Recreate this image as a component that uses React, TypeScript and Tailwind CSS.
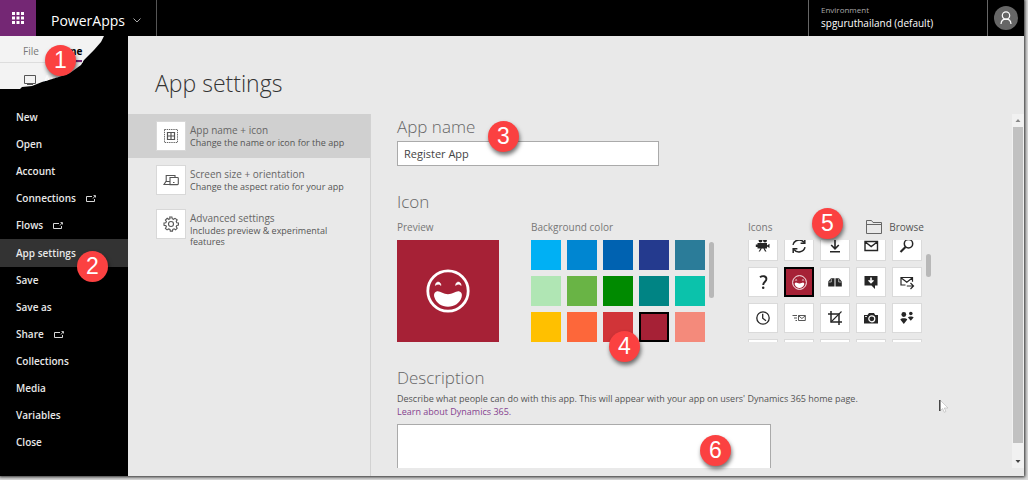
import { useState, type ReactNode } from "react";

function Badge({ n, place }: { n: number; place: string }) {
  return (
    <span
      className={`absolute z-20 flex size-[31px] items-center justify-center rounded-full bg-[#fb4141] font-['Liberation_Sans',sans-serif] text-[23px] leading-none font-medium text-white shadow-[1px_3px_4px_rgba(0,0,0,0.55)] ${place}`}
    >
      {n}
    </span>
  );
}

const menu: { label: string; external?: boolean }[] = [
  { label: "New" },
  { label: "Open" },
  { label: "Account" },
  { label: "Connections", external: true },
  { label: "Flows", external: true },
  { label: "App settings" },
  { label: "Save" },
  { label: "Save as" },
  { label: "Share", external: true },
  { label: "Collections" },
  { label: "Media" },
  { label: "Variables" },
  { label: "Close" },
];

function ExternalIcon() {
  return (
    <svg className="h-2 w-2.5" viewBox="0 0 10 8" fill="none" stroke="#d8d8d8">
      <path d="M6 1.500H.5v5h8V4" />
      <path d="M7 3.500 9 1M7.500.5h2v2" strokeWidth=".9" />
    </svg>
  );
}

const swatches = [
  { name: "Sky blue", cls: "bg-[#00b0f4]" },
  { name: "Blue", cls: "bg-[#0086d1]" },
  { name: "Dark blue", cls: "bg-[#0062b1]" },
  { name: "Indigo", cls: "bg-[#243a8e]" },
  { name: "Steel", cls: "bg-[#2b7c99]" },
  { name: "Mint", cls: "bg-[#b0e6b4]" },
  { name: "Light green", cls: "bg-[#69b445]" },
  { name: "Green", cls: "bg-[#008a00]" },
  { name: "Teal", cls: "bg-[#008484]" },
  { name: "Turquoise", cls: "bg-[#0bc2ab]" },
  { name: "Yellow", cls: "bg-[#ffc000]" },
  { name: "Orange", cls: "bg-[#fd673a]" },
  { name: "Red", cls: "bg-[#d13438]" },
  { name: "Crimson", cls: "bg-[#a62136]" },
  { name: "Salmon", cls: "bg-[#f48a7b]" },
];

function Smile({ className }: { className: string }) {
  return (
    <svg className={className} viewBox="0 0 44 44" fill="none">
      <circle cx="22" cy="22" r="20.2" stroke="#fff" strokeWidth="2.8" />
      <path d="M9.400 16.400c.4-4.400 5-4.400 5.600 0-1.800-1.600-3.800-1.600-5.600 0ZM29.600 16.400c.4-4.400 5-4.400 5.600 0-1.800-1.600-3.800-1.600-5.600 0Z" fill="#fff" stroke="#fff" strokeWidth=".6" />
      <path d="M10.500 22.500c3-1.300 6.500 2.700 11.500 2.700s8.500-4 11.500-2.700c2.600 1.100 2.800 3.500 2 6C33.800 33.800 28.500 37.800 22 37.800S10.200 33.800 8.500 28.500c-.8-2.500-.6-4.900 2-6Z" fill="#fff" />
    </svg>
  );
}

const glyphs: { name: string; art: ReactNode }[] = [
  {
    name: "Video",
    art: (
      <g fill="#262626">
        <circle cx="5.500" cy="2.500" r="1.900" />
        <circle cx="10" cy="2.500" r="1.900" />
        <path d="M2.500 5h9.500v5.500H2.500zM.8 6.500h2v2.500h-2zM12 7.500l2.500-1.700v4.200L12 8.600zM5.500 10.500h1.200L5 13.500H3.600zM8.500 10.500h1.200l1.800 3H10z" />
      </g>
    ),
  },
  {
    name: "Sync",
    art: (
      <g fill="none" stroke="#262626" strokeWidth="1.500">
        <path d="M2 6.800A6.200 6.200 0 0 1 13 4.500M14 9.200A6.200 6.200 0 0 1 3 11.500" />
        <path d="M13.800 1v4.200H9.600M2.200 15v-4.200h4.200" />
      </g>
    ),
  },
  {
    name: "Download",
    art: (
      <g fill="none" stroke="#262626" strokeWidth="1.600">
        <path d="M8 0v10.500M4.200 7 8 10.800 11.800 7M3 13.800h10" />
      </g>
    ),
  },
  {
    name: "Mail",
    art: (
      <g fill="none" stroke="#262626" strokeWidth="1.400">
        <path d="M2 3.500h12.500v9H2zM2 3.800l6.200 4.700 6.300-4.700" />
      </g>
    ),
  },
  {
    name: "Search",
    art: (
      <g fill="none" stroke="#262626">
        <circle cx="9.500" cy="5.800" r="4.200" strokeWidth="1.500" />
        <path d="m6.500 9-5 5" strokeWidth="2.200" />
      </g>
    ),
  },
  {
    name: "Help",
    art: (
      <g>
        <path d="M5 3.300C7.500 1.200 11.400 2 11.400 5c0 2.600-3.200 3-3.200 6" fill="none" stroke="#262626" strokeWidth="1.900" />
        <circle cx="8.200" cy="13.800" r="1.250" fill="#262626" />
      </g>
    ),
  },
  { name: "Smile", art: null },
  {
    name: "Book",
    art: (
      <g fill="#262626">
        <path d="M1.200 12.500V7.500l2.800-3.200h3.500v8.200zM8.500 4.300H12l2.800 3.200v5H8.500z" />
        <path d="M4.300 4.800v3.200H1.500M11.700 4.800v3.200h2.800" fill="none" stroke="#fff" strokeWidth=".6" />
      </g>
    ),
  },
  {
    name: "Import message",
    art: (
      <g>
        <path d="M1.500 2h13v9.500H12V15l-3.500-3.500h-7z" fill="#262626" />
        <path d="M8 3.500v5M5.600 6.300 8 8.700l2.400-2.400" fill="none" stroke="#fff" strokeWidth="1.600" />
      </g>
    ),
  },
  {
    name: "Forward mail",
    art: (
      <g fill="none" stroke="#262626" strokeWidth="1.200">
        <path d="M6.500 11H2V3.500h11.500v4.200M2 3.800l5.800 4.500 5.700-4.500M7.800 12h6.500M11.500 9l3 3-3 3" />
      </g>
    ),
  },
  {
    name: "Clock",
    art: (
      <g fill="none" stroke="#262626" strokeWidth="1.300">
        <circle cx="8" cy="8" r="6.200" />
        <path d="M7.700 3.800v4.500l3.300 2.500" />
      </g>
    ),
  },
  {
    name: "Send mail",
    art: (
      <g fill="none" stroke="#444" strokeWidth=".9">
        <path d="M7.500 5.500h6.800v5H7.500zM7.500 5.800l3.400 2.700 3.400-2.700M1.500 5.500H6M3 8h3M4.500 10.500H6" />
      </g>
    ),
  },
  {
    name: "Crop",
    art: (
      <g fill="none" stroke="#262626" strokeWidth="1.500">
        <path d="M4 1v11h11M1 4h11v11" />
        <path d="M4 12 14.500 1.500" strokeWidth="1.100" />
      </g>
    ),
  },
  {
    name: "Camera",
    art: (
      <g>
        <path d="M1 5h3.500L6 3h5l1.200 2H15v8.500H1z" fill="#262626" />
        <circle cx="8.800" cy="8.800" r="3" fill="none" stroke="#fff" strokeWidth="1.200" />
        <path d="M2.200 6.500h1.600" stroke="#fff" />
      </g>
    ),
  },
  {
    name: "People",
    art: (
      <g fill="#262626">
        <circle cx="4.800" cy="4.500" r="2.400" />
        <circle cx="11.800" cy="3.500" r="1.800" />
        <path d="M1.300 9.500c.8-1.700 6.200-1.700 7 0L4.800 14zM9 7.500c.8-1.200 4.800-1.200 5.600 0l-2.800 3.300z" />
      </g>
    ),
  },
  { name: "More 1", art: null },
  { name: "More 2", art: null },
  { name: "More 3", art: null },
  { name: "More 4", art: null },
  { name: "More 5", art: null },
];

const sections: { title: string; note: string; icon: ReactNode }[] = [
  {
    title: "App name + icon",
    note: "Change the name or icon for the app",
    icon: (
      <>
        <rect x="1.500" y="1.500" width="13" height="13" strokeDasharray="1.400 .8" strokeWidth=".9" />
        <path d="M4.500 4.500h7v7h-7zM8 4.500v7M4.500 8h7" strokeWidth="1.200" />
      </>
    ),
  },
  {
    title: "Screen size + orientation",
    note: "Change the aspect ratio for your app",
    icon: <path d="M12 5V3.500H3.200V9L1 12.500h6M3.200 9.500h3.500M7 5.500h7.500a.8.8 0 0 1 .8.8v5.500a.8.8 0 0 1-.8.8H7zM10 10.500h1.500" strokeWidth="1.100" />,
  },
  {
    title: "Advanced settings",
    note: "Includes preview & experimental features",
    icon: (
      <>
        <path d="m6.700 1 .3 1.700-1.300.6-1.500-1L2.400 4l1 1.500-.6 1.300L1 7v2.200l1.800.4.6 1.200-1 1.500 1.700 1.600 1.500-1 1.400.6.3 1.600h2.200l.3-1.700 1.300-.6 1.500 1 1.600-1.600-1-1.500.6-1.300 1.700-.3V7l-1.700-.3-.6-1.300 1-1.500L12 2.300l-1.500 1-1.300-.6L8.900 1z" strokeWidth="1.100" />
        <circle cx="8" cy="8" r="2.500" strokeWidth="1.100" />
      </>
    ),
  },
];

export default function App() {
  const [name, setName] = useState("Register App");
  const [color, setColor] = useState(13);
  const [icon, setIcon] = useState(6);

  return (
    <div className="h-screen bg-[#dcdcdc] pr-1 pb-1 font-['Open_Sans','Noto_Sans',sans-serif] text-[#666]">
      <div className="relative flex h-full flex-col bg-[#e9e9e9] shadow-[0_0_3px_1px_#222]">
        <header className="flex h-9 shrink-0 bg-black text-white">
          <button aria-label="App launcher" className="flex w-9 items-center justify-center bg-[#742774]">
            <svg className="size-3" viewBox="0 0 12 12" fill="#fff">
              <path d="M0 0h3v3H0zM4.500 0h3v3h-3zM9 0h3v3H9zM0 4.500h3v3H0zM4.500 4.500h3v3h-3zM9 4.500h3v3H9zM0 9h3v3H0zM4.500 9h3v3h-3zM9 9h3v3H9z" />
            </svg>
          </button>
          <button className="flex w-[121px] items-center justify-between border-r border-[#555] pr-[15px] pl-[15px] pt-1 text-[14px]">
            PowerApps
            <svg className="h-[5px] w-2" viewBox="0 0 8 5" fill="none" stroke="#aaa">
              <path d="m.5.5 3.500 3.500L7.500.5" />
            </svg>
          </button>
          <div className="ml-auto flex w-[180px] flex-col border-r border-l border-[#666] pt-1 pl-3">
            <span className="text-[8px] leading-3 text-[#aaa]">Environment</span>
            <span className="text-[10px] leading-[14px] font-medium">spguruthailand (default)</span>
          </div>
          <button aria-label="Profile" className="flex w-9 items-center justify-center">
            <span className="flex size-6 items-center justify-center rounded-full bg-[#666]">
              <svg className="size-4" viewBox="0 0 16 16" fill="none" stroke="#fff" strokeWidth="1.200">
                <circle cx="8" cy="5.500" r="3.700" />
                <path d="M3 14c.2-3 2.200-4.800 5-4.800s4.800 1.800 5 4.800" />
              </svg>
            </span>
          </button>
        </header>

        <div className="flex min-h-0 flex-1">
          <aside className="relative flex w-32 shrink-0 flex-col bg-black text-white">
            <div className="h-[68px] shrink-0">
              <div className="h-[53px] w-[105px] bg-[#f3f3f3] [clip-path:polygon(0_0,104px_0,101px_6px,94px_14px,84px_24px,81px_29px,70px_37px,62px_40px,52px_43px,42px_46px,32px_50px,22px_51px,20px_53px,0_53px)]">
                <div className="flex h-[27px] gap-3.5 border-b border-[#ddd] pl-[23px] text-[10px] text-[#777]">
                  <span className="pt-2">File</span>
                  <span className="h-[26px] border-b-2 border-[#742774] pt-2 font-bold text-black">Home</span>
                </div>
                <div className="flex h-[25px] items-center gap-2 pt-2 pl-6 text-[10px]">
                  <svg className="h-[11px] w-3" viewBox="0 0 12 11" fill="none" stroke="#555">
                    <path d="M.5 1.500h11v8H.5zM3 10.500h6" />
                  </svg>
                  App
                </div>
              </div>
            </div>
            <nav className="flex flex-col text-[10px] font-semibold text-[#e8e8e8]">
              {menu.map((m) => (
                <button
                  key={m.label}
                  className={`flex items-center gap-2.5 pl-4 ${m.label === "App settings" ? "h-7 bg-[#333]" : "h-[27px]"}`}
                >
                  {m.label}
                  {m.external && <ExternalIcon />}
                </button>
              ))}
            </nav>
            <Badge n={1} place="left-[45px] top-[9px]" />
            <Badge n={2} place="left-[77px] top-[215px]" />
          </aside>

          <main className="flex min-w-0 flex-1 flex-col">
            <h1 className="h-[78px] shrink-0 pt-[29px] pl-[27px] text-[23px] leading-9 font-light text-[#333]">App settings</h1>
            <div className="flex min-h-0 flex-1">
              <nav className="w-[243px] shrink-0 border-r border-[#d2d2d2]">
                {sections.map((s, i) => (
                  <button
                    key={s.title}
                    className={`flex min-h-11 w-full gap-1 pt-[7px] pl-7 text-left ${i === 0 ? "bg-[#d0d0d0]" : ""}`}
                  >
                    <span className="flex size-[30px] shrink-0 items-center justify-center border border-[#d8d8d8] bg-white">
                      <svg className="size-4" viewBox="0 0 16 16" fill="none" stroke="#555">
                        {s.icon}
                      </svg>
                    </span>
                    <span className="flex w-[166px] flex-col pt-[3px]">
                      <span className="text-[10px] leading-[13px] text-[#666]">{s.title}</span>
                      <span className="text-[9px] leading-[11px] text-[#555]">{s.note}</span>
                    </span>
                  </button>
                ))}
              </nav>

              <section className="relative mb-2 flex min-w-0 flex-1">
                <div className="min-w-0 flex-1 overflow-hidden pl-[26px]">
                  <label htmlFor="name" className="block h-[27px] text-[17px] leading-[26px] font-light text-[#666]">
                    App name
                  </label>
                  <input
                    id="name"
                    value={name}
                    onChange={(e) => setName(e.target.value)}
                    className="block h-[25px] w-[262px] border border-[#aaa] bg-white px-1.5 text-[11px] text-[#444] outline-none"
                  />
                  <h2 className="mt-[23px] h-[27px] text-[17px] leading-[26px] font-light text-[#666]">Icon</h2>
                  <div className="flex text-[10px] leading-4 text-[#777]">
                    <div className="mr-8">
                      <div className="pt-[3px] pb-[5px]">Preview</div>
                      <div className={`flex size-[102px] items-center justify-center ${swatches[color].cls}`}>
                        <Smile className="size-11" />
                      </div>
                    </div>
                    <div className="mr-[34px]">
                      <div className="pt-[3px] pb-[5px]">Background color</div>
                      <div className="flex gap-1">
                        <div className="grid grid-cols-5 gap-1.5">
                          {swatches.map((s, i) => (
                            <button
                              key={s.name}
                              aria-label={s.name}
                              onClick={() => setColor(i)}
                              className={`size-[30px] ${s.cls} ${i === color ? "border-2 border-black" : ""}`}
                            />
                          ))}
                        </div>
                        <div className="mt-[2px] h-14 w-[5px] rounded-full bg-[#b8b8b8]" />
                      </div>
                    </div>
                    <div>
                      <div className="flex justify-between pt-[3px] pr-[7px] pb-[5px]">
                        <span>Icons</span>
                        <button className="flex items-center gap-[7px] text-[#555]">
                          <svg className="h-[14px] w-4" viewBox="0 0 16 14" fill="none" stroke="#666">
                            <path d="M.5 13.500V.5h5l1.500 2h8.500v11zM.5 4.500h15" />
                          </svg>
                          Browse
                        </button>
                      </div>
                      <div className="flex h-[102px] gap-1 overflow-hidden">
                        <div className="-mt-[9px] grid grid-cols-5 content-start gap-1.5">
                          {glyphs.map((g, i) => (
                            <button
                              key={g.name}
                              aria-label={g.name}
                              onClick={() => setIcon(i)}
                              className={`flex size-[30px] items-center justify-center ${i === icon ? "border-2 border-black bg-[#a62136]" : "border border-[#dadada] bg-white"}`}
                            >
                              {g.name === "Smile" ? (
                                <Smile className="size-[15px]" />
                              ) : (
                                <svg className="size-4" viewBox="0 0 16 16">{g.art}</svg>
                              )}
                            </button>
                          ))}
                        </div>
                        <div className="mt-[14px] h-[23px] w-[5px] rounded-full bg-[#b8b8b8]" />
                      </div>
                    </div>
                  </div>
                  <label htmlFor="description" className="mt-[23px] block h-[27px] text-[17px] leading-[26px] font-light text-[#666]">
                    Description
                  </label>
                  <p className="text-[9px] leading-[13px] text-[#555]">
                    Describe what people can do with this app. This will appear with your app on users' Dynamics 365 home page.
                    <br />
                    <a href="#dynamics" className="text-[#85418f]">Learn about Dynamics 365.</a>
                  </p>
                  <textarea
                    id="description"
                    className="mt-[6px] block h-20 w-[374px] resize-none border border-[#aaa] bg-white outline-none"
                  />
                </div>
                <div className="flex w-3 shrink-0 flex-col bg-[#f1f1f1]">
                  <svg className="h-[13px] w-3" viewBox="0 0 12 13" fill="#888">
                    <path d="M3.500 8 6 5l2.500 3z" />
                  </svg>
                  <div className="mx-px flex-1 bg-[#c1c1c1]" />
                  <svg className="h-[25px] w-3" viewBox="0 0 12 25" fill="#444">
                    <path d="M3.500 17h5L6 20z" />
                  </svg>
                </div>
                <Badge n={3} place="left-[117px] top-[7px]" />
                <Badge n={4} place="left-[238px] top-[217px]" />
                <Badge n={5} place="left-[441px] top-[94px]" />
                <Badge n={6} place="left-[329px] top-[321px]" />
                <svg className="absolute top-[285px] left-[568px] h-[14px] w-[10px]" viewBox="0 0 10 14">
                  <path d="M1 1v11l2.600-2.500 1.600 3.800 1.700-.8-1.600-3.500H9z" fill="#fff" stroke="#bbb" strokeWidth=".7" />
                  <path d="M.8 1v11" stroke="#222" strokeWidth="1.200" />
                </svg>
              </section>
            </div>
          </main>
        </div>
      </div>
    </div>
  );
}
